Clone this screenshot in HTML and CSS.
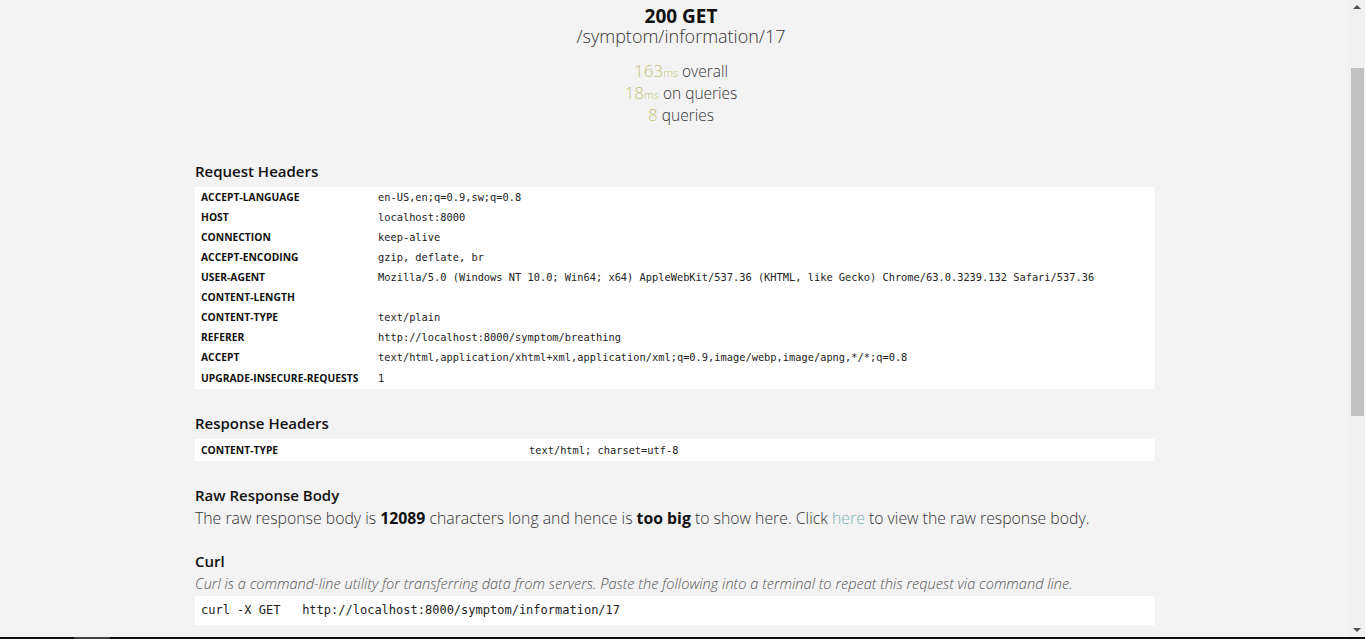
FILE: index.html
```html
<!DOCTYPE html>
<html>
<head>
<meta charset="utf-8">
<link rel="stylesheet" href="styles.css">
</head>
<body>
<div class="screen">
  <main class="viewport">
    <header class="summary">
      <div class="status">200 GET</div>
      <div class="path">/symptom/information/17</div>
      <div class="stats">
        <div class="stat"><span class="num">163</span><span class="unit">ms</span> overall</div>
        <div class="stat"><span class="num">18</span><span class="unit">ms</span> on queries</div>
        <div class="stat"><span class="num">8</span> queries</div>
      </div>
    </header>

    <section class="block block-req">
      <h2 class="heading">Request Headers</h2>
      <table class="headers req">
        <tr><td class="key">ACCEPT-LANGUAGE</td><td class="val">en-US,en;q=0.9,sw;q=0.8</td></tr>
        <tr><td class="key">HOST</td><td class="val">localhost:8000</td></tr>
        <tr><td class="key">CONNECTION</td><td class="val">keep-alive</td></tr>
        <tr><td class="key">ACCEPT-ENCODING</td><td class="val">gzip, deflate, br</td></tr>
        <tr><td class="key">USER-AGENT</td><td class="val">Mozilla/5.0 (Windows NT 10.0; Win64; x64) AppleWebKit/537.36 (KHTML, like Gecko) Chrome/63.0.3239.132 Safari/537.36</td></tr>
        <tr><td class="key">CONTENT-LENGTH</td><td class="val"></td></tr>
        <tr><td class="key">CONTENT-TYPE</td><td class="val">text/plain</td></tr>
        <tr><td class="key">REFERER</td><td class="val">http://localhost:8000/symptom/breathing</td></tr>
        <tr><td class="key">ACCEPT</td><td class="val">text/html,application/xhtml+xml,application/xml;q=0.9,image/webp,image/apng,*/*;q=0.8</td></tr>
        <tr><td class="key">UPGRADE-INSECURE-REQUESTS</td><td class="val">1</td></tr>
      </table>
    </section>

    <section class="block block-resp">
      <h2 class="heading">Response Headers</h2>
      <table class="headers resp">
        <tr><td class="key">CONTENT-TYPE</td><td class="val">text/html; charset=utf-8</td></tr>
      </table>
    </section>

    <section class="block block-raw">
      <h2 class="heading">Raw Response Body</h2>
      <p class="body-text">The raw response body is <b>12089</b> characters long and hence is <b>too big</b> to show here. Click <a class="link" href="#">here</a> to view the raw response body.</p>
    </section>

    <section class="block block-curl">
      <h2 class="heading">Curl</h2>
      <p class="desc">Curl is a command-line utility for transferring data from servers. Paste the following into a terminal to repeat this request via command line.</p>
      <pre class="code">curl -X GET   http://localhost:8000/symptom/information/17</pre>
    </section>
  </main>
  <div class="scrollbar">
    <div class="arrow up"></div>
    <div class="track"><div class="thumb"></div></div>
    <div class="arrow down"></div>
  </div>
</div>
<div class="taskbar"><div class="task"></div></div>
</body>
</html>
```
FILE: styles.css
```css
html, body {
  margin: 0;
  padding: 0;
  height: 100%;
  overflow: hidden;
}
body {
  background: #f3f3f3;
  font-family: "Open Sans", "Noto Sans", sans-serif;
  color: #333;
  display: flex;
  flex-direction: column;
}
.screen {
  flex: 1;
  display: flex;
  min-height: 0;
}
.viewport {
  flex: 1;
  display: flex;
  flex-direction: column;
  align-items: center;
  padding-left: 2px;
}
.summary {
  text-align: center;
  padding-left: 12px;
  padding-top: 6px;
  height: 127px;
  box-sizing: border-box;
}
.status {
  font-weight: 700;
  font-size: 19px;
  line-height: 20px;
  color: #111;
}
.path {
  font-weight: 300;
  font-size: 18px;
  line-height: 20px;
  color: #333;
}
.stats {
  margin-top: 14px;
  font-weight: 300;
  font-size: 15.5px;
}
.stat {
  height: 22px;
  line-height: 22px;
}
.num {
  color: #c3c377;
  font-size: 17px;
  line-height: 1;
}
.unit {
  color: #c3c377;
  font-size: 11px;
  line-height: 1;
}
.block {
  width: 960px;
}
.block-req {
  margin-top: 33px;
}
.block-resp {
  margin-top: 23px;
}
.block-raw {
  margin-top: 23px;
}
.block-curl {
  margin-top: 21px;
}
.heading {
  margin: 0;
  font-size: 15px;
  font-weight: 600;
  line-height: 22px;
  color: #111;
  padding-bottom: 5px;
}
.headers {
  width: 100%;
  background: #fff;
  border-collapse: collapse;
}
.headers td {
  padding: 0 6px;
  height: 20px;
  vertical-align: middle;
}
.headers.req tr:last-child td {
  height: 21px;
  padding-bottom: 1px;
}
.headers.resp td {
  height: 22px;
}
.headers.req .key {
  width: 165px;
}
.headers.resp .key {
  width: 316px;
}
.key {
  font-family: "Open Sans", sans-serif;
  font-weight: 700;
  font-size: 10.3px;
  color: #111;
  white-space: nowrap;
}
.val {
  font-family: "DejaVu Sans Mono", monospace;
  font-size: 10.35px;
  color: #222;
  white-space: nowrap;
}
.body-text {
  margin: 0;
  font-size: 15.8px;
  font-weight: 300;
  line-height: 22px;
  color: #333;
  margin-top: -4px;
}
.body-text b {
  font-weight: 700;
  color: #111;
}
.link {
  color: #7ab3b3;
  text-decoration: none;
}
.desc {
  margin: 0;
  margin-top: -4px;
  font-size: 14.6px;
  font-style: italic;
  font-weight: 300;
  line-height: 20px;
  color: #555;
}
.code {
  margin: 3px 0 0;
  background: #fff;
  padding: 0 6px;
  height: 29px;
  line-height: 28px;
  font-family: "DejaVu Sans Mono", monospace;
  font-size: 12px;
  color: #222;
}
.scrollbar {
  width: 17px;
  background: #f1f1f1;
  display: flex;
  flex-direction: column;
  align-items: center;
}
.arrow {
  width: 0;
  height: 0;
  border-left: 4px solid transparent;
  border-right: 4px solid transparent;
}
.arrow.up {
  margin-top: 5px;
  border-bottom: 4px solid #505050;
}
.arrow.down {
  margin-bottom: 5px;
  border-top: 4px solid #505050;
}
.track {
  flex: 1;
  width: 100%;
  padding-top: 59px;
  box-sizing: border-box;
}
.thumb {
  margin-left: 3px;
  width: 13px;
  height: 348px;
  background: #c1c1c1;
}
.taskbar {
  height: 2px;
  background: #0c0c0c;
  display: flex;
}
.task {
  margin-left: 74px;
  width: 36px;
  background: #444;
}
```
